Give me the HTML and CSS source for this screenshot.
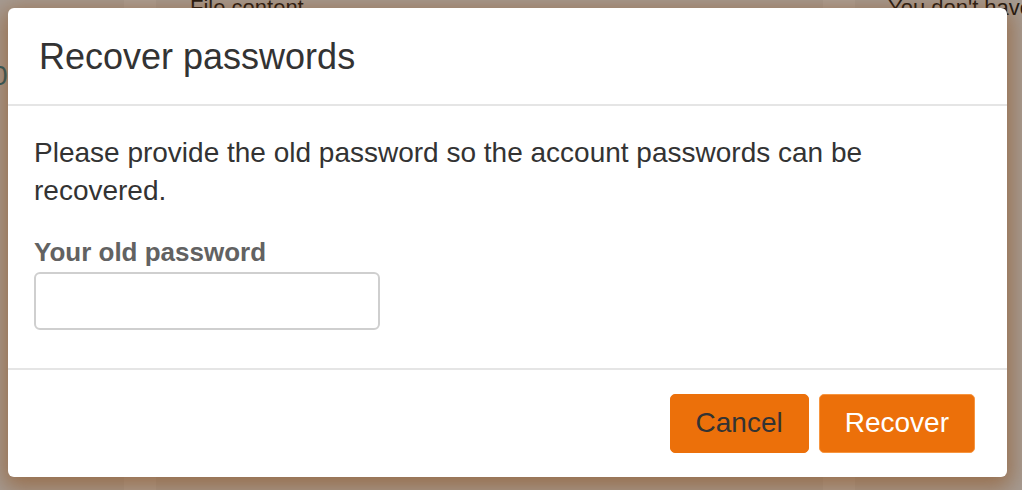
FILE: index.html
```html
<!DOCTYPE html>
<html lang="en">
<head>
<meta charset="utf-8">
<title>Recover passwords</title>
<link rel="stylesheet" href="styles.css">
</head>
<body>
<div class="page">
  <div class="col col-a"><span class="stray">0</span></div>
  <div class="col col-band"></div>
  <div class="col col-main"><span class="bg-text">File content</span></div>
  <div class="col col-band"></div>
  <div class="col col-side"><span class="bg-text">You don't have</span></div>
</div>
<div class="modal" role="dialog" aria-labelledby="modal-title">
  <div class="modal-header">
    <h4 class="modal-title" id="modal-title">Recover passwords</h4>
  </div>
  <div class="modal-body">
    <p class="intro">Please provide the old password so the account passwords can be recovered.</p>
    <label class="field-label" for="old-pw">Your old password</label>
    <input class="field-input" id="old-pw" type="password">
  </div>
  <div class="modal-footer">
    <button class="btn btn-cancel" type="button">Cancel</button>
    <button class="btn btn-primary" type="button">Recover</button>
  </div>
</div>
</body>
</html>
```
FILE: styles.css
```css
html, body {
  margin: 0;
  padding: 0;
  width: 1022px;
  height: 490px;
  overflow: hidden;
  font-family: "Liberation Sans", Arial, sans-serif;
}

.page {
  display: flex;
  height: 490px;
  background: #a69c94;
}

.col {
  height: 100%;
  box-sizing: border-box;
  overflow: hidden;
}

.col-a { width: 124px; padding-top: 60px; }
.col-band { width: 32px; background: #aca29a; }
.col-main { width: 667px; padding-left: 34px; }
.col-side { flex: 1; padding-left: 33px; }

.bg-text {
  display: block;
  font-size: 22px;
  line-height: 22px;
  margin-top: -3px;
  color: #1c1612;
  white-space: nowrap;
}

.stray {
  display: block;
  font-size: 28px;
  line-height: 32px;
  color: #1d5a68;
  margin-left: -8px;
}

.modal {
  position: absolute;
  left: 8px;
  top: 8px;
  width: 999px;
  height: 469px;
  background: #fff;
  border-radius: 6px;
  box-shadow: 0 6px 22px 5px rgba(140, 75, 20, 0.55);
  display: flex;
  flex-direction: column;
  color: #333;
}

.modal-header {
  height: 98px;
  padding: 29px 31px 0;
  box-sizing: border-box;
  border-bottom: 2px solid #e5e5e5;
}

.modal-title {
  margin: 0;
  font-size: 36px;
  line-height: 40px;
  font-weight: normal;
  color: #333;
}

.modal-body {
  padding: 28px 26px 38px;
  display: flex;
  flex-direction: column;
  align-items: flex-start;
}

.intro {
  margin: 0 0 26px;
  font-size: 28px;
  line-height: 38px;
  color: #333;
}

.field-label {
  font-size: 26px;
  line-height: 1.3;
  font-weight: bold;
  color: #626262;
  margin-bottom: 2px;
}

.field-input {
  width: 346px;
  height: 58px;
  box-sizing: border-box;
  border: 2px solid #cfcfcf;
  border-radius: 6px;
  background: #fff;
  margin: 0;
  padding: 0 12px;
}

.modal-footer {
  flex: 1;
  border-top: 2px solid #e5e5e5;
  display: flex;
  justify-content: flex-end;
  align-items: flex-start;
  gap: 10px;
  padding: 24px 32px 0;
}

.btn {
  height: 59px;
  padding: 0 25px;
  font-family: "Liberation Sans", Arial, sans-serif;
  font-size: 28px;
  border-radius: 5px;
  background: #ec700a;
  border: 1px solid #ec700a;
  cursor: pointer;
}

.btn-cancel { color: #333; }

.btn-primary {
  color: #fff;
  border-color: #f7953f;
}
```
